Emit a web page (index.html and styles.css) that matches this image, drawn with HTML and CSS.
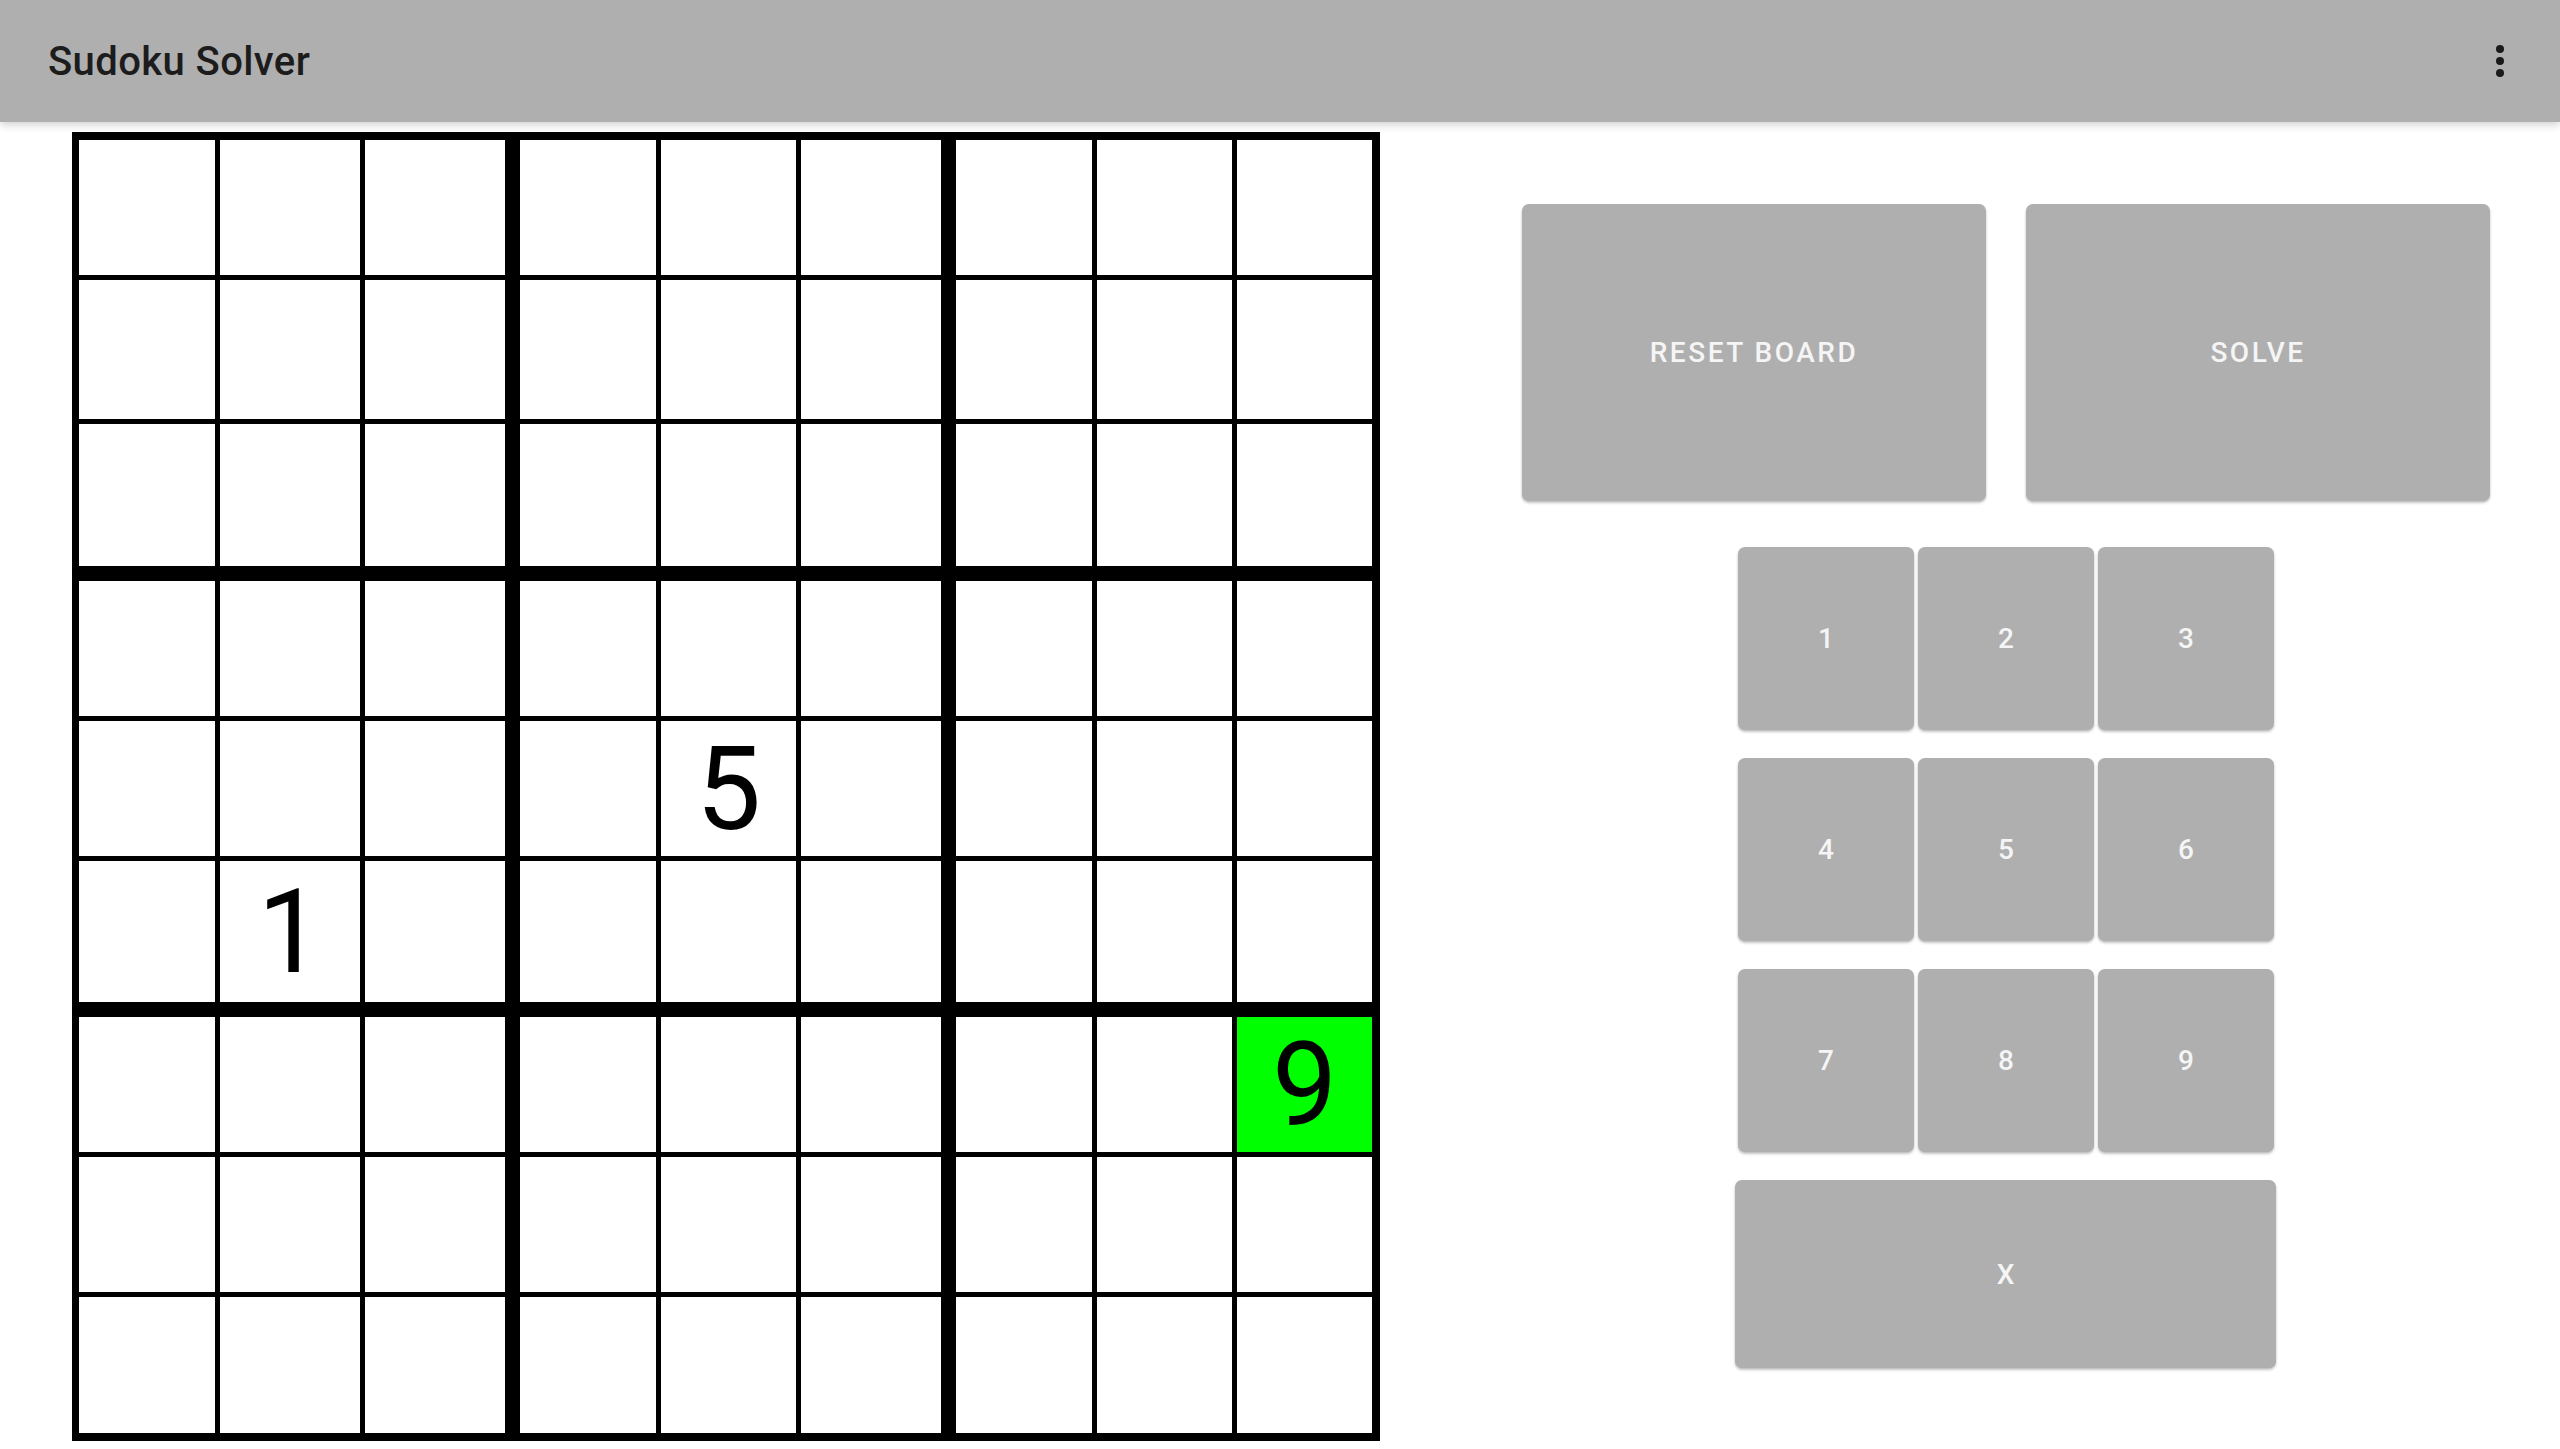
FILE: index.html
```html
<!DOCTYPE html>
<html lang="en">
<head>
<meta charset="UTF-8">
<meta name="viewport" content="width=device-width, initial-scale=1.0">
<title>Sudoku Solver</title>
<link rel="stylesheet" href="styles.css">
</head>
<body>
    <header class="toolbar">
        <h1 class="title">Sudoku Solver</h1>
        <button class="menu" aria-label="More options">
            <svg width="8" height="32" viewBox="0 0 8 32">
                <circle cx="4" cy="4" r="4" fill="#1a1a1a"/>
                <circle cx="4" cy="16" r="4" fill="#1a1a1a"/>
                <circle cx="4" cy="28" r="4" fill="#1a1a1a"/>
            </svg>
        </button>
    </header>

    <main class="main">
        <div class="board" id="board"></div>

        <div class="panel">
            <div class="actions">
                <button class="btn big">Reset Board</button>
                <button class="btn big">Solve</button>
            </div>
            <div class="numpad">
                <button class="btn key">1</button>
                <button class="btn key">2</button>
                <button class="btn key">3</button>
                <button class="btn key">4</button>
                <button class="btn key">5</button>
                <button class="btn key">6</button>
                <button class="btn key">7</button>
                <button class="btn key">8</button>
                <button class="btn key">9</button>
                <button class="btn key clear">X</button>
            </div>
        </div>
    </main>

    <script>
        // board values by row/column (1-based)
        let values = { '5,5': '5', '6,2': '1', '7,9': '9' };
        let selected = '7,9';

        function drawBoard() {
            let board = document.getElementById('board');
            board.innerHTML = '';
            for (let b = 0; b < 9; b++) {
                let block = document.createElement('div');
                block.className = 'block';
                for (let c = 0; c < 9; c++) {
                    let row = Math.floor(b / 3) * 3 + Math.floor(c / 3) + 1;
                    let col = (b % 3) * 3 + (c % 3) + 1;
                    let key = row + ',' + col;
                    let cell = document.createElement('div');
                    cell.className = 'cell' + (key === selected ? ' selected' : '');
                    cell.textContent = values[key] || '';
                    block.appendChild(cell);
                }
                board.appendChild(block);
            }
        }

        drawBoard();
    </script>
</body>
</html>
```

FILE: styles.css
```css
body {
    margin: 0;
    padding: 0;
    background-color: #fff;
    font-family: Roboto, "Liberation Sans", sans-serif;
}
.toolbar {
    height: 122px;
    background-color: #afafaf;
    display: flex;
    align-items: center;
    justify-content: space-between;
    padding: 0 56px 0 48px;
    box-shadow: 0 3px 8px rgba(0, 0, 0, 0.18);
    position: relative;
    z-index: 1;
}
.title {
    margin: 0;
    font-size: 40px;
    font-weight: 500;
    color: #1c1c1c;
    letter-spacing: 0.4px;
}
.menu {
    background: none;
    border: none;
    padding: 0;
    display: flex;
    cursor: pointer;
}
.main {
    display: flex;
    align-items: flex-start;
}
.board {
    box-sizing: border-box;
    width: 1308px;
    height: 1309px;
    margin: 10px 0 0 72px;
    padding: 8px 8px 8px 7px;
    background-color: #000;
    display: grid;
    grid-template-columns: 426px 421px 416px;
    grid-template-rows: 426px 421px 416px;
    gap: 15px;
}
.block {
    display: grid;
    gap: 5px;
}
/* cell sizes differ slightly per block, as in the app's layout */
.block:nth-child(3n+1) { grid-template-columns: 136px 140px 140px; }
.block:nth-child(3n+2) { grid-template-columns: 136px 135px 140px; }
.block:nth-child(3n+3) { grid-template-columns: 136px 135px 135px; }
.block:nth-child(-n+3) { grid-template-rows: 135px 139px 142px; }
.block:nth-child(n+4) { grid-template-rows: 135px 135px 141px; }
.block:nth-child(n+7) { grid-template-rows: 135px 135px 136px; }
.cell {
    background-color: #fff;
    display: flex;
    align-items: center;
    justify-content: center;
    font-size: 116px;
    color: #000;
    line-height: 1;
}
.cell.selected {
    background-color: #00ff00;
}
.panel {
    flex: 1;
    padding: 82px 70px 0 142px;
}
.actions {
    display: flex;
    gap: 40px;
}
.btn {
    background-color: #afafaf;
    color: #f5f5f5;
    border: none;
    border-radius: 7px;
    font-family: Roboto, "Liberation Sans", sans-serif;
    font-weight: 500;
    font-size: 28px;
    text-transform: uppercase;
    box-shadow: 0 2px 3px rgba(0, 0, 0, 0.2), 0 1px 2px rgba(0, 0, 0, 0.1);
    cursor: pointer;
}
.btn.big {
    flex: 1;
    height: 297px;
    letter-spacing: 2.5px;
}
.numpad {
    display: grid;
    grid-template-columns: repeat(3, 176px);
    grid-auto-rows: 183px;
    justify-content: center;
    column-gap: 4px;
    row-gap: 28px;
    margin-top: 46px;
}
.btn.key {
    width: 100%;
    height: 100%;
}
.btn.clear {
    grid-column: 1 / 4;
    width: calc(100% + 5px);
    height: 188px;
    margin-left: -3px;
}
```
